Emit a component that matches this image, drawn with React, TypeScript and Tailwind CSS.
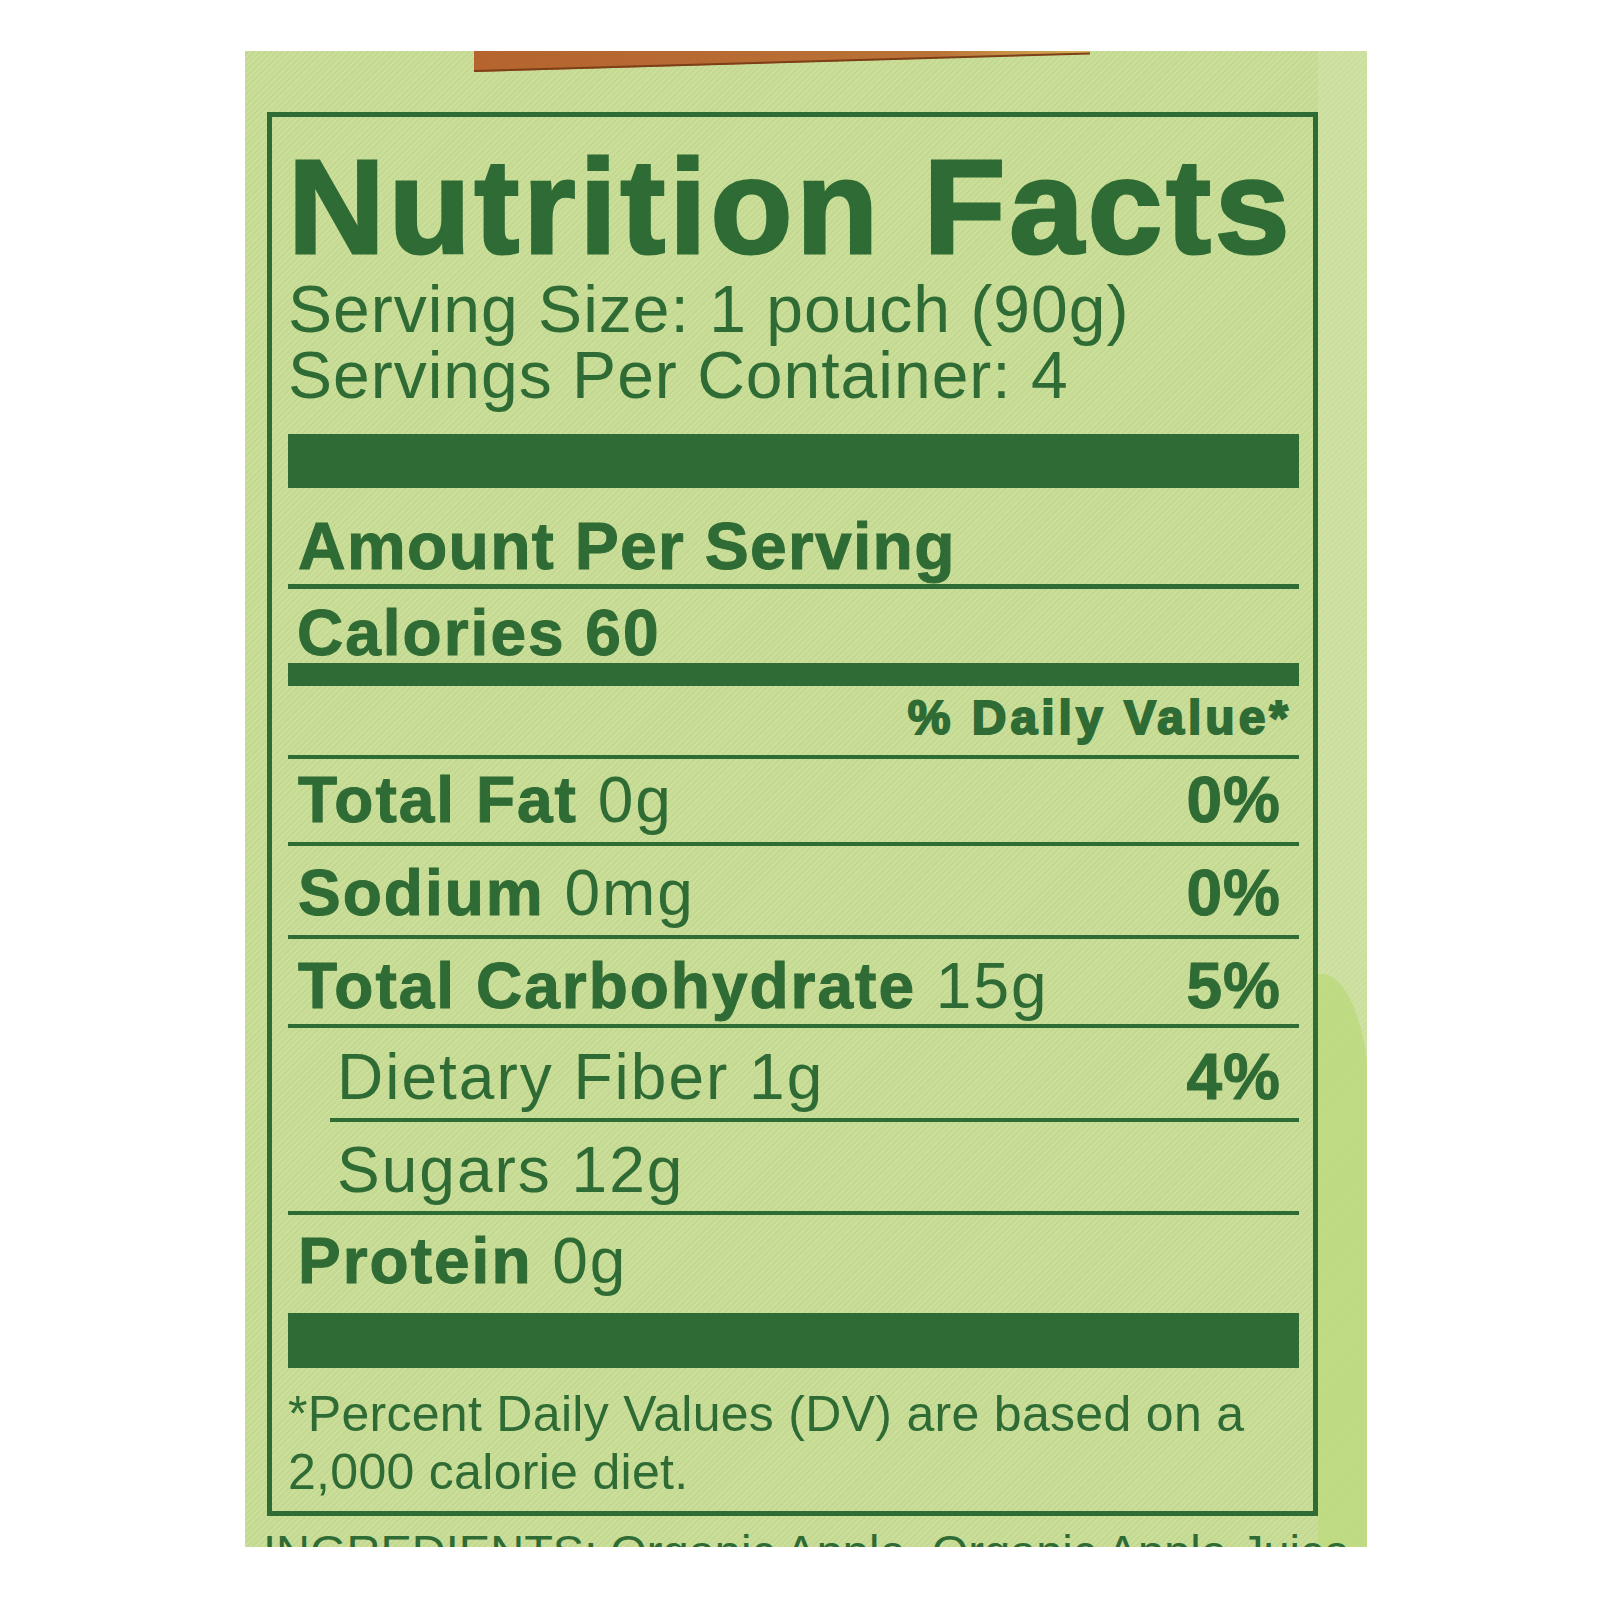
import React from 'react';

interface Nutrient {
  label: string;
  amount: string;
  dv?: string;
  sub?: boolean;
  height: string;
  pad: string;
  lineIndent?: boolean;
}

const ink = 'text-[#2f6b34]';

const nutrients: Nutrient[] = [
  { label: 'Total Fat', amount: '0g', dv: '0%', height: 'h-[83px]', pad: 'pt-[9px]' },
  { label: 'Sodium', amount: '0mg', dv: '0%', height: 'h-[89px]', pad: 'pt-[15px]' },
  { label: 'Total Carbohydrate', amount: '15g', dv: '5%', height: 'h-[85px]', pad: 'pt-[15px]' },
  { label: 'Dietary Fiber', amount: '1g', dv: '4%', sub: true, height: 'h-[90px]', pad: 'pt-[17px]', lineIndent: true },
  { label: 'Sugars', amount: '12g', sub: true, height: 'h-[89px]', pad: 'pt-[16px]' },
  { label: 'Protein', amount: '0g', height: 'h-[98px]', pad: 'pt-[14px]' },
];

const Rule = ({ indent }: { indent?: boolean }) => (
  <div className={`h-[4px] bg-[#2f6b34] ${indent ? 'ml-[42px]' : ''}`} />
);

const NutrientRow = ({ item }: { item: Nutrient }) => (
  <div className={`flex justify-between text-[64px] leading-none ${item.height} ${item.pad}`}>
    <div className={`tracking-[2px] ${item.sub ? 'pl-[49px]' : 'pl-[10px]'}`}>
      {item.sub ? (
        <span>
          {item.label} {item.amount}
        </span>
      ) : (
        <span>
          <span className="font-bold [-webkit-text-stroke:1px_#2f6b34]">{item.label}</span> {item.amount}
        </span>
      )}
    </div>
    {item.dv && (
      <div className="pr-[18px] font-bold tracking-[1px] [-webkit-text-stroke:1px_#2f6b34]">{item.dv}</div>
    )}
  </div>
);

const App: React.FC = () => {
  return (
    <div className={`w-[1600px] h-[1600px] bg-white pt-[51px] font-['Liberation_Sans',Arial,sans-serif] ${ink}`}>
      <div className="relative ml-[245px] w-[1122px] h-[1496px] overflow-hidden bg-[#c8dc97] bg-[repeating-linear-gradient(135deg,#cbdf9b_0px,#cbdf9b_2px,#c3d890_2px,#c3d890_4px)]">
        {/* artwork bits peeking in around the label */}
        <svg className="absolute left-[229px] top-0" width="620" height="24" viewBox="0 0 620 24">
          <defs>
            <linearGradient id="wedge" x1="0" x2="1" y1="0" y2="0">
              <stop offset="0" stopColor="#b5642e" />
              <stop offset="0.75" stopColor="#b97236" />
              <stop offset="1" stopColor="#d6b45a" />
            </linearGradient>
          </defs>
          <polygon points="0,0 616,0 616,3 0,21" fill="url(#wedge)" />
          <line x1="0" y1="20" x2="616" y2="2.5" stroke="#7c3f18" strokeWidth="2" />
        </svg>
        <div className="absolute left-[1073px] top-0 w-[49px] h-full bg-[#d2e3a8] opacity-60" />
        <svg className="absolute left-[1073px] top-[915px]" width="49" height="581" viewBox="0 0 49 581">
          <path d="M0 8 C 22 4, 42 40, 49 95 L49 581 L0 581 Z" fill="#b9d97a" opacity="0.75" />
        </svg>

        <div className="relative ml-[22px] mt-[61px] w-[1051px] border-[5px] border-[#2f6b34] pl-4 pr-[14px] pb-[10px]">
          <div className="mt-[23px] text-[134px] leading-none font-bold tracking-[4px] [-webkit-text-stroke:3px_#2f6b34] whitespace-nowrap">
            Nutrition Facts
          </div>
          <div className="mt-[2px] text-[66px] leading-[66px] tracking-[1px] whitespace-nowrap">
            <div>Serving Size: 1 pouch (90g)</div>
            <div>Servings Per Container: 4</div>
          </div>

          <div className="mt-[26px] h-[54px] bg-[#2f6b34]" />

          <div className="mt-[25px] pl-[10px] text-[66px] leading-none font-bold tracking-[1.3px] [-webkit-text-stroke:1px_#2f6b34]">
            Amount Per Serving
          </div>
          <div className="mt-[5px] h-[5px] bg-[#2f6b34]" />
          <div className="h-[74px] pt-[12px] pl-[9px] text-[64px] leading-none font-bold tracking-[2px] [-webkit-text-stroke:1px_#2f6b34]">
            Calories 60
          </div>
          <div className="h-[23px] bg-[#2f6b34]" />

          <div className="flex justify-end h-[69px] pt-[8px] pr-[7px] text-[48px] leading-none font-bold tracking-[4px] [-webkit-text-stroke:2px_#2f6b34]">
            % Daily Value*
          </div>
          <Rule />

          {nutrients.map((item, i) => (
            <React.Fragment key={item.label}>
              <NutrientRow item={item} />
              {i < nutrients.length - 1 && <Rule indent={item.lineIndent} />}
            </React.Fragment>
          ))}

          <div className="h-[55px] bg-[#2f6b34]" />

          <div className="mt-[17px] text-[50px] leading-[58px] tracking-[0.3px]">
            <div className="whitespace-nowrap">*Percent Daily Values (DV) are based on a</div>
            <div>2,000 calorie diet.</div>
          </div>
        </div>

        <div className="relative ml-[18px] mt-[12px] text-[47px] leading-none whitespace-nowrap">
          INGREDIENTS: Organic Apple, Organic Apple Juice
        </div>
      </div>
    </div>
  );
};

export default App;
